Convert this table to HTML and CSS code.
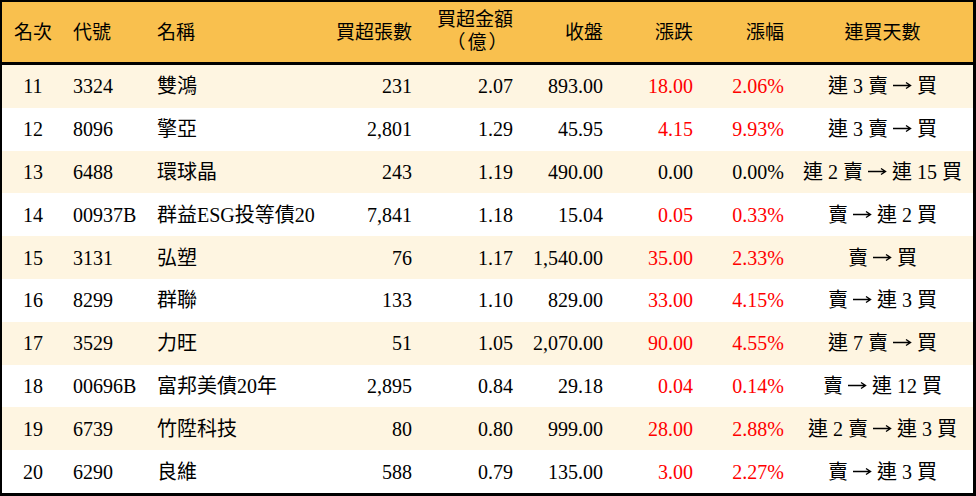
FILE: index.html
```html
<!DOCTYPE html>
<html lang="zh-Hant">
<head>
<meta charset="utf-8">
<title>買超排行</title>
<link rel="stylesheet" href="styles.css">
</head>
<body>
<table class="rank">
  <colgroup>
    <col class="c1"><col class="c2"><col class="c3"><col class="c4"><col class="c5"><col class="c6"><col class="c7"><col class="c8"><col class="c9">
  </colgroup>
  <thead>
    <tr>
      <th class="ctr">名次</th>
      <th class="lft">代號</th>
      <th class="lft nm">名稱</th>
      <th class="rgt">買超張數</th>
      <th class="rgt"><span class="two">買超金額<br><span class="unit">（億）</span></span></th>
      <th class="rgt">收盤</th>
      <th class="rgt">漲跌</th>
      <th class="rgt">漲幅</th>
      <th class="ctr">連買天數</th>
    </tr>
  </thead>
  <tbody>
    <tr class="odd"><td class="ctr">11</td><td class="lft">3324</td><td class="lft nm">雙鴻</td><td class="rgt">231</td><td class="rgt">2.07</td><td class="rgt">893.00</td><td class="rgt up">18.00</td><td class="rgt up">2.06%</td><td class="ctr">連 3 賣 <svg class="ar" viewBox="0 0 19 9"><path d="M0 4.5H17M13 1.5L17.5 4.5L13 7.5"/></svg> 買</td></tr>
    <tr><td class="ctr">12</td><td class="lft">8096</td><td class="lft nm">擎亞</td><td class="rgt">2,801</td><td class="rgt">1.29</td><td class="rgt">45.95</td><td class="rgt up">4.15</td><td class="rgt up">9.93%</td><td class="ctr">連 3 賣 <svg class="ar" viewBox="0 0 19 9"><path d="M0 4.5H17M13 1.5L17.5 4.5L13 7.5"/></svg> 買</td></tr>
    <tr class="odd"><td class="ctr">13</td><td class="lft">6488</td><td class="lft nm">環球晶</td><td class="rgt">243</td><td class="rgt">1.19</td><td class="rgt">490.00</td><td class="rgt">0.00</td><td class="rgt">0.00%</td><td class="ctr">連 2 賣 <svg class="ar" viewBox="0 0 19 9"><path d="M0 4.5H17M13 1.5L17.5 4.5L13 7.5"/></svg> 連 15 買</td></tr>
    <tr><td class="ctr">14</td><td class="lft">00937B</td><td class="lft nm">群益ESG投等債20</td><td class="rgt">7,841</td><td class="rgt">1.18</td><td class="rgt">15.04</td><td class="rgt up">0.05</td><td class="rgt up">0.33%</td><td class="ctr">賣 <svg class="ar" viewBox="0 0 19 9"><path d="M0 4.5H17M13 1.5L17.5 4.5L13 7.5"/></svg> 連 2 買</td></tr>
    <tr class="odd"><td class="ctr">15</td><td class="lft">3131</td><td class="lft nm">弘塑</td><td class="rgt">76</td><td class="rgt">1.17</td><td class="rgt">1,540.00</td><td class="rgt up">35.00</td><td class="rgt up">2.33%</td><td class="ctr">賣 <svg class="ar" viewBox="0 0 19 9"><path d="M0 4.5H17M13 1.5L17.5 4.5L13 7.5"/></svg> 買</td></tr>
    <tr><td class="ctr">16</td><td class="lft">8299</td><td class="lft nm">群聯</td><td class="rgt">133</td><td class="rgt">1.10</td><td class="rgt">829.00</td><td class="rgt up">33.00</td><td class="rgt up">4.15%</td><td class="ctr">賣 <svg class="ar" viewBox="0 0 19 9"><path d="M0 4.5H17M13 1.5L17.5 4.5L13 7.5"/></svg> 連 3 買</td></tr>
    <tr class="odd"><td class="ctr">17</td><td class="lft">3529</td><td class="lft nm">力旺</td><td class="rgt">51</td><td class="rgt">1.05</td><td class="rgt">2,070.00</td><td class="rgt up">90.00</td><td class="rgt up">4.55%</td><td class="ctr">連 7 賣 <svg class="ar" viewBox="0 0 19 9"><path d="M0 4.5H17M13 1.5L17.5 4.5L13 7.5"/></svg> 買</td></tr>
    <tr><td class="ctr">18</td><td class="lft">00696B</td><td class="lft nm">富邦美債20年</td><td class="rgt">2,895</td><td class="rgt">0.84</td><td class="rgt">29.18</td><td class="rgt up">0.04</td><td class="rgt up">0.14%</td><td class="ctr">賣 <svg class="ar" viewBox="0 0 19 9"><path d="M0 4.5H17M13 1.5L17.5 4.5L13 7.5"/></svg> 連 12 買</td></tr>
    <tr class="odd"><td class="ctr">19</td><td class="lft">6739</td><td class="lft nm">竹陞科技</td><td class="rgt">80</td><td class="rgt">0.80</td><td class="rgt">999.00</td><td class="rgt up">28.00</td><td class="rgt up">2.88%</td><td class="ctr">連 2 賣 <svg class="ar" viewBox="0 0 19 9"><path d="M0 4.5H17M13 1.5L17.5 4.5L13 7.5"/></svg> 連 3 買</td></tr>
    <tr><td class="ctr">20</td><td class="lft">6290</td><td class="lft nm">良維</td><td class="rgt">588</td><td class="rgt">0.79</td><td class="rgt">135.00</td><td class="rgt up">3.00</td><td class="rgt up">2.27%</td><td class="ctr">賣 <svg class="ar" viewBox="0 0 19 9"><path d="M0 4.5H17M13 1.5L17.5 4.5L13 7.5"/></svg> 連 3 買</td></tr>
  </tbody>
</table>
</body>
</html>
```

FILE: styles.css
```css
html, body {
  margin: 0;
  padding: 0;
  background: #ffffff;
}

.rank {
  width: 976px;
  border-collapse: separate;
  border-spacing: 0;
  table-layout: fixed;
  border-top: 2px solid #000;
  border-left: 2px solid #000;
  border-right: 3px solid #000;
  border-bottom: 3px solid #000;
  font-family: "Liberation Serif", "Noto Sans CJK TC", serif;
  font-size: 20px;
  color: #000;
}

.c1 { width: 62px; }
.c2 { width: 86px; }
.c3 { width: 180px; }
.c4 { width: 90px; }
.c5 { width: 101px; }
.c6 { width: 90px; }
.c7 { width: 90px; }
.c8 { width: 91px; }
.c9 { width: 181px; }

.rank th {
  height: 60px;
  padding: 0;
  background: #f9c04e;
  border-bottom: 3px solid #000;
  font-weight: normal;
  font-size: 19px;
  line-height: 23px;
  white-space: nowrap;
}

.rank td {
  height: 42.8px;
  padding: 0;
  line-height: 24px;
  white-space: nowrap;
  box-sizing: border-box;
}

.rank tr.odd td {
  background: #fef5e1;
}

.ctr { text-align: center; }
.lft { text-align: left; padding-left: 9px !important; }
.lft.nm { padding-left: 7px !important; }
.rgt { text-align: right; padding-right: 8px !important; }

.two {
  display: inline-block;
  text-align: center;
  position: relative;
  top: -1px;
}

.unit {
  display: inline-block;
  padding-left: 6px;
  letter-spacing: 2px;
}

.ar {
  width: 19px;
  height: 9px;
  vertical-align: 3px;
  fill: none;
  stroke: #000;
  stroke-width: 1.4;
}

.up { color: #ff0000; }
```
